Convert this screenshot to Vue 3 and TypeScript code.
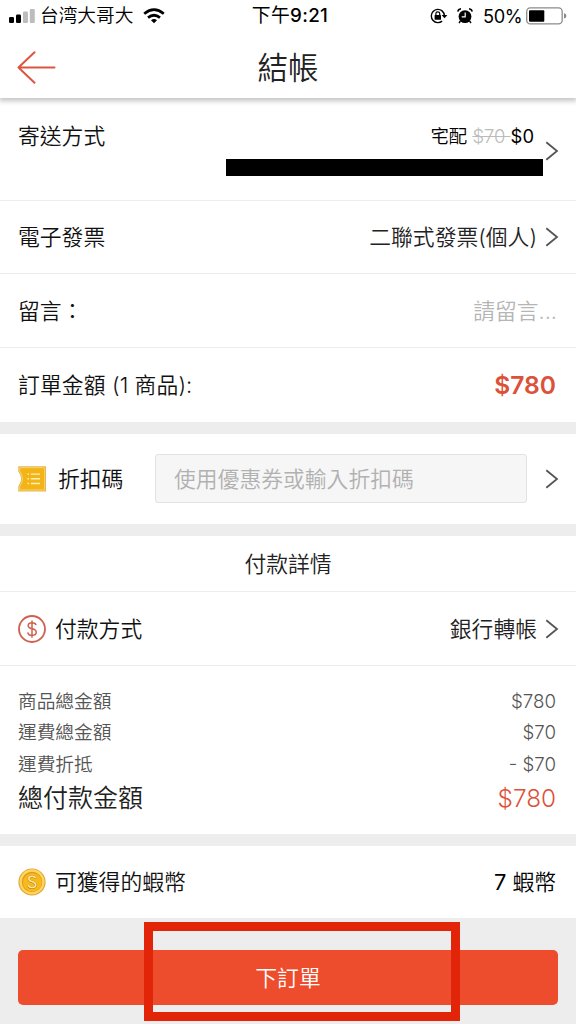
<script setup lang="ts">
interface SummaryLine {
  label: string
  value: string
}

const summary: SummaryLine[] = [
  { label: '商品總金額', value: '$780' },
  { label: '運費總金額', value: '$70' },
  { label: '運費折抵', value: '- $70' },
]
</script>

<template>
  <main class="screen">
    <header class="header">
      <div class="status">
        <div class="carrier">
          <svg class="signal" width="26" height="16" viewBox="0 0 26 16">
            <rect x="0" y="9" width="5" height="6" rx="1.3" fill="#000" />
            <rect x="7" y="6.5" width="5" height="8.5" rx="1.3" fill="#000" />
            <rect x="14" y="3.5" width="5" height="11.5" rx="1" fill="#bdbdbd" />
            <rect x="20.8" y="1" width="5" height="14" rx="1" fill="#bdbdbd" />
          </svg>
          <span class="carrier-name">台湾大哥大</span>
          <svg class="wifi" width="22" height="16" viewBox="0 0 22 16" fill="none" stroke="#000" stroke-width="2.7">
            <path d="M1.2 5.7Q11 -2.3 20.8 5.7" />
            <path d="M5 9.6Q11 4.9 17 9.6" />
            <path d="M8 12.3Q11 9.7 14 12.3L11 15.3Z" fill="#000" stroke="none" />
          </svg>
        </div>
        <span class="clock">下午<span class="digits">9:21</span></span>
        <div class="indicators">
          <svg width="18" height="16" viewBox="0 0 18 16">
            <path d="M12.1 2.9A6.6 6.6 0 1 0 12.1 13.1M12.1 2.9Q14.3 4.8 14.4 7.7" fill="none" stroke="#000" stroke-width="1.4" />
            <path d="M11.6 6.9H17.4L14.5 10.2Z" />
            <rect x="4.6" y="7" width="6.4" height="4.7" rx=".5" />
            <path d="M5.9 7V5.4Q5.9 3.8 7.8 3.8Q9.7 3.8 9.7 5.4V7" fill="none" stroke="#000" stroke-width="1.2" />
          </svg>
          <svg class="alarm" width="16" height="16" viewBox="0 0 16 16">
            <circle cx="8" cy="8.6" r="6.4" />
            <path d="M.8 3.6Q1.3 1.2 4 .8M15.2 3.6Q14.7 1.2 12 .8" fill="none" stroke="#000" stroke-width="1.5" />
            <path d="M3.4 13L2 15M12.6 13L14 15" stroke="#000" stroke-width="1.4" />
            <path d="M8.2 4.6V8.8H4.7" fill="none" stroke="#fff" stroke-width="1.2" />
          </svg>
          <span class="percent">50%</span>
          <svg class="battery" width="42" height="18" viewBox="0 0 42 18">
            <rect x=".7" y=".9" width="35.5" height="16" rx="3.6" fill="#fff" stroke="#8b8b8b" stroke-width="1.3" />
            <rect x="3" y="3.2" width="15.3" height="11.5" rx="1" />
            <path d="M38 6.2Q40.4 6.6 40.4 8.9Q40.4 11.2 38 11.6Z" fill="#8b8b8b" />
          </svg>
        </div>
      </div>
      <div class="nav">
        <svg class="back" width="40" height="34" viewBox="0 0 40 34" fill="none" stroke="#dc5540" stroke-width="2" stroke-linecap="round" stroke-linejoin="round">
          <path d="M37.5 16.5H1.5M17.5 1.3L1.5 16.5L17.5 31.7" />
        </svg>
        <h1>結帳</h1>
      </div>
    </header>

    <section class="row shipping">
      <span class="label">寄送方式</span>
      <div class="delivery">
        <p class="method">宅配 <s>$70&nbsp;</s><span>$0</span></p>
        <div class="redacted"></div>
      </div>
      <svg class="chevron" viewBox="0 0 14 20"><path d="M1.3 1.2L12 10L1.3 18.8" /></svg>
    </section>
    <section class="row invoice">
      <span class="label">電子發票</span>
      <span class="value">二聯式發票(個人)</span>
      <svg class="chevron" viewBox="0 0 14 20"><path d="M1.3 1.2L12 10L1.3 18.8" /></svg>
    </section>
    <section class="row">
      <span class="label">留言：</span>
      <span class="value placeholder">請留言...</span>
    </section>
    <section class="row amount">
      <span class="label">訂單金額 (1 商品):</span>
      <strong>$780</strong>
    </section>

    <section class="row coupon">
      <svg class="ticket" width="29" height="26" viewBox="0 0 29 26">
        <path d="M.3.3H28V25.4H.3V20.2Q6 12.9 .3 5.6Z" fill="#e8b64a" />
        <path d="M1.7 1.7H26.6V24H1.7V20.6Q7.3 12.9 1.7 5.1Z" fill="#f3b417" stroke="#f9dc92" stroke-width=".7" />
        <path d="M9.5 8.1H11M12.8 8.1H22M9.5 12.8H11M12.8 12.8H22M9.5 17.5H11M12.8 17.5H22" stroke="#fff0b5" stroke-width="1.4" />
      </svg>
      <span class="label">折扣碼</span>
      <div class="field">使用優惠券或輸入折扣碼</div>
      <svg class="chevron" viewBox="0 0 14 20"><path d="M1.3 1.2L12 10L1.3 18.8" /></svg>
    </section>

    <h2>付款詳情</h2>
    <section class="row payment">
      <svg class="round-icon" width="28" height="28" viewBox="0 0 28 28" fill="none" stroke="#ce604f">
        <circle cx="14" cy="14" r="13" stroke-width="1.8" />
        <path d="M18 10.1Q17.6 7.7 14 7.7Q10.2 7.7 10.2 10.6Q10.2 13.2 14 13.8Q18.2 14.6 18.2 17.3Q18.2 20.4 14 20.4Q10.1 20.4 9.8 17.4M14 5.4V22.7" stroke-width="1.5" />
      </svg>
      <span class="label">付款方式</span>
      <span class="value">銀行轉帳</span>
      <svg class="chevron" viewBox="0 0 14 20"><path d="M1.3 1.2L12 10L1.3 18.8" /></svg>
    </section>

    <section class="summary">
      <div v-for="line in summary" :key="line.label" class="line">
        <span>{{ line.label }}</span><span>{{ line.value }}</span>
      </div>
      <div class="line total"><span>總付款金額</span><b>$780</b></div>
    </section>

    <section class="row coins">
      <svg class="round-icon" width="28" height="28" viewBox="0 0 28 28">
        <circle cx="14" cy="14" r="13.6" fill="#dda536" />
        <circle cx="14" cy="13.8" r="12.6" fill="#ffd45c" />
        <circle cx="14" cy="14" r="10.2" fill="#d99b1e" />
        <circle cx="14.3" cy="14.4" r="9.4" fill="#f7b91b" />
        <path d="M17.7 10.5Q16.7 8.5 14 8.5Q10.8 8.5 10.8 11Q10.8 13.1 14 13.8Q17.7 14.7 17.7 17.1Q17.7 19.8 14 19.8Q11 19.8 10.3 17.4" fill="none" stroke="#c58a16" stroke-width="2.6" />
        <path d="M17.7 10.2Q16.7 8.2 14 8.2Q10.8 8.2 10.8 10.7Q10.8 12.8 14 13.5Q17.7 14.4 17.7 16.8Q17.7 19.5 14 19.5Q11 19.5 10.3 17.1" fill="none" stroke="#ffe69a" stroke-width="1.6" />
      </svg>
      <span class="label">可獲得的蝦幣</span>
      <span class="value">7 蝦幣</span>
    </section>

    <footer>
      <button type="button">下訂單</button>
      <div class="highlight"></div>
    </footer>
  </main>
</template>

<style scoped>
* { box-sizing: border-box; }
.screen {
  width: 576px;
  height: 1024px;
  overflow: hidden;
  display: flex;
  flex-direction: column;
  background: #ededed;
  color: #222;
  font-family: Inter, "Noto Sans CJK TC DemiLight", "Noto Sans CJK TC", sans-serif;
  font-weight: 350;
  font-size: 21.8px;
  line-height: 30px;
}
svg { display: block; flex: none; }
h1, h2, p { margin: 0; font-weight: 350; }
.header {
  position: relative;
  height: 98px;
  flex: none;
  background: #fff;
  box-shadow: 0 2px 5px 1px rgba(0, 0, 0, .24);
}
.status {
  display: grid;
  grid-template-columns: 1fr auto 1fr;
  align-items: center;
  height: 32px;
  padding: 0 8px 0 9px;
  color: #000;
}
.carrier, .indicators { display: flex; align-items: center; }
.carrier-name { margin: 0 10px 0 5px; font-size: 18.7px; }
.clock { font-family: Inter, "Noto Sans CJK TC", sans-serif; font-size: 18.8px; font-weight: 400; letter-spacing: .3px; margin-left: 3px; }
.digits { font-weight: 500; }
.indicators { justify-content: flex-end; }
.alarm { margin: 0 10px 0 9px; }
.percent { font-size: 18.2px; font-weight: 400; letter-spacing: -.5px; margin-right: 4px; }
.nav { position: relative; display: flex; justify-content: center; align-items: center; height: 70px; }
.nav h1 { font-size: 30.5px; line-height: 40px; padding-top: 1px; }
.back { position: absolute; left: 17px; top: 19px; }
.row {
  display: flex;
  align-items: center;
  flex: none;
  height: 74px;
  padding: 0 20px 0 18px;
  background: #fff;
  border-bottom: 1px solid #ededed;
}
.label { white-space: nowrap; color: #111; }
.value { margin-left: auto; white-space: nowrap; }
.chevron { width: 14px; height: 20px; margin-left: 8px; margin-right: -3px; fill: none; stroke: #555; stroke-width: 1.8; }
.shipping { height: 103px; align-items: flex-start; padding-top: 23px; }
.delivery { margin-left: auto; width: 317px; }
.method { height: 37px; padding-right: 9px; text-align: right; font-size: 18.4px; line-height: 30px; color: #000; }
.method span { font-weight: 400; }
.method s { color: #bbb; }
.redacted { height: 17px; margin-top: 1px; background: #000; }
.shipping .chevron { margin-left: 2px; margin-top: 20px; }
.invoice { height: 73px; }
.placeholder { color: #b5b5b5; margin-right: -1px; }
.amount { border: 0; }
.amount .label { letter-spacing: .12px; }
.amount strong { margin-left: auto; color: #dc5139; font-size: 24.6px; font-weight: 600; }
.coupon { height: 90px; margin-top: 12px; border: 0; }
.ticket { margin-right: 11px; }
.field {
  width: 372px;
  height: 49px;
  margin-left: auto;
  margin-top: -1px;
  padding-left: 18px;
  line-height: 48px;
  color: #b1b1b1;
  background: #f6f6f6;
  border: 1px solid #e2e2e2;
  border-radius: 3px;
}
.coupon .chevron { margin-left: 18px; }
h2 { height: 56px; flex: none; margin-top: 12px; background: #fff; border-bottom: 1px solid #ededed; font-size: 21.8px; line-height: 56px; text-align: center; }
.round-icon { margin-right: 9px; }
.summary { height: 168px; flex: none; padding: 20px 20px 0 18px; background: #fff; }
.line { display: flex; justify-content: space-between; height: 31.3px; line-height: 31.3px; font-size: 18.7px; color: #555; }
.total { height: 37px; line-height: 37px; font-size: 25px; color: #222; }
.total b { color: #dc5139; font-weight: 350; font-size: 24.3px; }
.coins { height: 72px; margin-top: 12px; border: 0; }
.coins .value { color: #000; font-weight: 400; }
footer { position: relative; flex: 1; padding: 32px 18px 0; }
button { display: block; width: 540px; height: 55px; padding: 0; border: 0; border-radius: 5px; background: #ee4d2d; color: #fff; font: inherit; }
.highlight { position: absolute; left: 144px; top: 4px; width: 316px; height: 99px; border: 9px solid #e22509; }
</style>

<style>
body { margin: 0; }
</style>
